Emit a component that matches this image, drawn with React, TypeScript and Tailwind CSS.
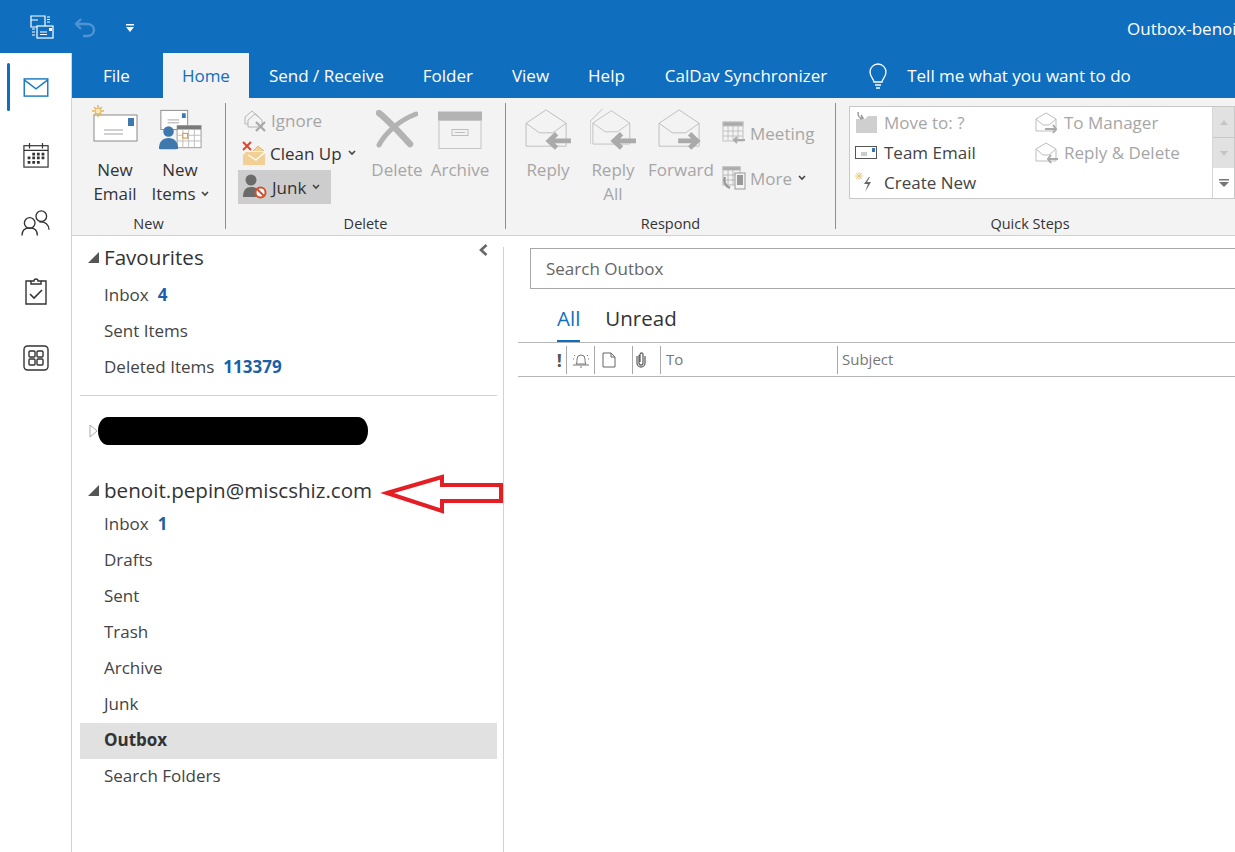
import type { ReactNode } from "react";

const FONT = "font-['Open_Sans','Noto_Sans',sans-serif]";

function MailRail() {
  return (
    <svg width="26" height="19" viewBox="0 0 28 21" fill="none" stroke="#1b7ac2" strokeWidth="1.600">
      <rect x="1" y="1" width="26" height="19" fill="#fff" />
      <path d="M1 2 14 12 27 2" />
    </svg>
  );
}

function CalendarRail() {
  return (
    <svg width="26" height="26" viewBox="0 0 28 28" fill="none" stroke="#333" strokeWidth="1.300">
      <rect x="1" y="4" width="26" height="23" />
      <path d="M1 9h26M7 1v6M21 1v6" />
      <path d="M10 13h3M15 13h3M20 13h3M5 17h3M10 17h3M15 17h3M20 17h3M5 22h3M10 22h3M15 22h3" strokeWidth="3" />
    </svg>
  );
}

function PeopleRail() {
  return (
    <svg width="29" height="28" viewBox="0 0 30 28" fill="none" stroke="#333" strokeWidth="1.400">
      <circle cx="9" cy="14" r="5.500" />
      <path d="M1 27c0-5 3-8 8-8s8 3 8 8" />
      <circle cx="21" cy="7" r="5.500" />
      <path d="M19 13c6-1 10 3 10 8" />
    </svg>
  );
}

function TasksRail() {
  return (
    <svg width="24" height="28" viewBox="0 0 24 28" fill="none" stroke="#333" strokeWidth="1.400">
      <path d="M7 4H2v23h20V4h-5" />
      <path d="M7 7V4h3a2 2 0 0 1 4 0h3v3z" />
      <path d="m6 17 4 4 8-8" strokeWidth="1.600" />
    </svg>
  );
}

function AppsRail() {
  return (
    <svg width="26" height="26" viewBox="0 0 26 26" fill="none" stroke="#333" strokeWidth="1.400">
      <rect x="1" y="1" width="24" height="24" rx="3.500" />
      <rect x="6" y="6" width="6" height="6" rx="1" />
      <rect x="14" y="6" width="6" height="6" rx="1" />
      <rect x="6" y="14" width="6" height="6" rx="1" />
      <rect x="14" y="14" width="6" height="6" rx="1" />
    </svg>
  );
}

function QatIcon() {
  return (
    <svg width="24" height="24" viewBox="0 0 24 24" fill="none" stroke="#fff" strokeWidth="1.200">
      <path d="M1 1h14v11H1zM1 5h7M17 2h3M17 4.500h3M17 7h3" />
      <rect x="7" y="11" width="16" height="12" fill="#106ebe" />
      <path d="M10 17h7M10 19.500h7" />
      <rect x="19" y="13" width="3" height="3" fill="#fff" stroke="none" />
      <path d="M2 14h3M2 17h3M2 20h3" />
    </svg>
  );
}

function UndoIcon() {
  return (
    <svg width="22" height="20" viewBox="0 0 22 20" fill="none" stroke="#4f93d3" strokeWidth="2.400">
      <path d="M7 1 2 6l5 5" />
      <path d="M2 6h11c4 0 7 2.500 7 6s-3 6-7 6H9" />
    </svg>
  );
}

function NewEmailIcon() {
  return (
    <svg width="48" height="40" viewBox="0 0 48 40" fill="none" className="mb-[6px]">
      <rect x="3" y="11" width="43" height="26" fill="#fff" stroke="#8a8a8a" />
      <rect x="37" y="14" width="6" height="8" fill="#3f78ad" />
      <path d="M13 26h19M13 30h19" stroke="#a5a5a5" />
      <g stroke="#e5b763" strokeWidth="1.500">
        <path d="M7 1v12M1 7h12M3 3l8 8M11 3l-8 8" />
      </g>
      <circle cx="7" cy="7" r="3" fill="#f8e7b8" stroke="#e5b763" />
    </svg>
  );
}

function NewItemsIcon() {
  return (
    <svg width="44" height="41" viewBox="0 0 46 42" fill="none">
      <rect x="3" y="1" width="28" height="20" fill="#fff" stroke="#8a8a8a" />
      <rect x="25" y="4" width="4" height="5" fill="#3f78ad" />
      <path d="M10 11h12M10 14h12" stroke="#a5a5a5" />
      <rect x="20" y="17" width="25" height="23" fill="#fff" stroke="#9a9a9a" />
      <rect x="20" y="17" width="25" height="4" fill="#7a7a7a" />
      <path d="M26 21v19M32 21v19M38 21v19M20 27h25M20 33h25" stroke="#bdbdbd" />
      <rect x="26" y="25" width="5" height="5" fill="#fff" stroke="#d98a2b" />
      <circle cx="11" cy="23" r="5.500" fill="#3f78ad" />
      <path d="M1 41c0-7 4-11 10-11s10 4 10 11c0 1-20 1-20 0z" fill="#3f78ad" />
    </svg>
  );
}

function IgnoreIcon() {
  return (
    <svg width="24" height="24" viewBox="0 0 24 24" fill="none" stroke="#b5b5b5">
      <path d="M2 9 9 3l7 6v7H2z" fill="#f3f3f3" />
      <path d="M5 12 12 6l7 6v7H5z" fill="#f3f3f3" />
      <path d="m13 14 9 9M22 14l-9 9" strokeWidth="2.200" stroke="#a8a8a8" />
    </svg>
  );
}

function CleanUpIcon() {
  return (
    <svg width="24" height="24" viewBox="0 0 24 24" fill="none">
      <path d="M4 11h19v13H1V14z" fill="#f2cf95" />
      <path d="m6 14 8 5 9-8" stroke="#fff" strokeWidth="1.400" />
      <path d="M11 10 16 5l6 5" fill="#f2cf95" stroke="#e2b66f" />
      <path d="m1 1 8 8M9 1 1 9" stroke="#d9482f" strokeWidth="2" />
    </svg>
  );
}

function JunkIcon() {
  return (
    <svg width="26" height="26" viewBox="0 0 26 26" fill="none">
      <circle cx="9" cy="6" r="5.500" fill="#6b6b6b" />
      <path d="M1 23c0-7 3-10 8-10s7 2 8 5v5z" fill="#6b6b6b" />
      <circle cx="18.500" cy="18.500" r="5" fill="#fff" stroke="#d4502f" strokeWidth="2" />
      <path d="m15 15 7 7" stroke="#d4502f" strokeWidth="2" />
    </svg>
  );
}

function DeleteIcon() {
  return (
    <svg width="42" height="38" viewBox="0 0 42 38" fill="none" stroke="#b3b3b3" strokeLinecap="round" className="mb-[2px]">
      <path d="M3 3c10 8 20 19 31 31" strokeWidth="6.500" />
      <path d="M40 4C24 10 10 22 3 35" strokeWidth="5" />
    </svg>
  );
}

function ArchiveIcon() {
  return (
    <svg width="44" height="39" viewBox="0 0 44 38" fill="none">
      <rect x="0" y="0" width="44" height="9" fill="#b3b3b3" />
      <rect x="1" y="9" width="42" height="28" stroke="#c4c4c4" />
      <rect x="14" y="18" width="16" height="6" stroke="#bdbdbd" />
      <path d="M17 21h10" stroke="#bdbdbd" />
    </svg>
  );
}

function EnvelopeOpen({ dir, stack }: { dir: "left" | "right"; stack?: boolean }) {
  return (
    <svg width="46" height="42" viewBox="0 0 48 44" fill="none" stroke="#bdbdbd">
      {stack && <path d="M0 38V14L13 1" />}
      <path d="M1 16 22 2l21 14v24H1z" fill="#f3f3f3" transform={stack ? "translate(2 1) scale(.92)" : undefined} />
      <path d="m1 16 14 10h14l14-10" transform={stack ? "translate(2 1) scale(.92)" : undefined} />
      {dir === "left" ? (
        <path d="M33 27 25 34.500l8 7.500M26 34.500h22" stroke="#aaa" strokeWidth="5" />
      ) : (
        <path d="M33 27l8 7.500-8 7.500M21 34.500h19" stroke="#aaa" strokeWidth="5" />
      )}
    </svg>
  );
}

function MeetingIcon() {
  return (
    <svg width="24" height="24" viewBox="0 0 24 24" fill="none" stroke="#c2c2c2">
      <rect x="1" y="1" width="20" height="19" fill="#f3f3f3" />
      <rect x="1" y="1" width="20" height="4" fill="#aaa" />
      <path d="M6 5v15M11 5v15M16 5v15M1 10h20M1 15h20" />
      <path d="m15 16-3 3 3 3M13 19h10" stroke="#aaa" strokeWidth="1.800" />
    </svg>
  );
}

function MoreIcon() {
  return (
    <svg width="24" height="24" viewBox="0 0 24 24" fill="none" stroke="#b8b8b8">
      <rect x="1" y="1" width="17" height="18" fill="#f3f3f3" />
      <rect x="1" y="1" width="17" height="3" fill="#aaa" />
      <path d="M6 4v15M11 4v15M1 9h17M1 14h17" />
      <rect x="13" y="7" width="10" height="16" fill="#f3f3f3" stroke="#999" />
      <rect x="15" y="9" width="6" height="10" fill="#999" stroke="none" />
      <path d="M3 11c-2 4 0 9 5 11" stroke="#999" strokeWidth="2.400" />
    </svg>
  );
}

function MoveToIcon() {
  return (
    <svg width="24" height="22" viewBox="0 0 24 22" fill="none">
      <path d="M1 7h9l3-3h9v17H1z" fill="#cfcfcf" />
      <path d="M3 0c0 5 1 6 5 6M5 7 8 6 6 3" stroke="#9c9c9c" strokeWidth="1.500" />
    </svg>
  );
}

function TeamEmailIcon() {
  return (
    <svg width="22" height="14" viewBox="0 0 22 14" fill="none">
      <rect x="0.500" y="0.500" width="21" height="12" fill="#fff" stroke="#555" />
      <rect x="17" y="2" width="3" height="4" fill="#2f74b5" />
      <path d="M6 7h6M6 9h6" stroke="#999" />
    </svg>
  );
}

function CreateNewIcon() {
  return (
    <svg width="22" height="22" viewBox="0 0 22 22" fill="none">
      <path d="M4 0v8M0 4h8M1 1l6 6M7 1 1 7" stroke="#e8c77e" />
      <path d="M14 5 9 12h4l-3 8 6-10h-4l3-5z" fill="#666" />
    </svg>
  );
}

function SmallEnvelope({ dir }: { dir: "left" | "right" }) {
  return (
    <svg width="24" height="22" viewBox="0 0 24 22" fill="none" stroke="#bdbdbd">
      <path d="M1 7 11 1l10 6v12H1z" fill="#fff" />
      <path d="m1 7 7 6h6l7-6" />
      {dir === "left" ? (
        <path d="M16 13l-3 4 3 4M14 17h9" stroke="#aaa" strokeWidth="2" />
      ) : (
        <path d="M18 13l3 4-3 4M10 17h10" stroke="#aaa" strokeWidth="2" />
      )}
    </svg>
  );
}

function Chevron({ className = "stroke-[#444]" }: { className?: string }) {
  return (
    <svg width="8" height="6" viewBox="0 0 8 6" fill="none" className={className} strokeWidth="1.600">
      <path d="m1 1 3 3 3-3" />
    </svg>
  );
}

function Sep() {
  return <div className="mb-[6px] w-px shrink-0 bg-[#8f8f8f]" />;
}

function Group({ label, width, children }: { label: string; width: string; children: ReactNode }) {
  return (
    <div className={`flex shrink-0 flex-col ${width}`}>
      <div className="flex flex-1">{children}</div>
      <div className="h-[22px] text-center text-[14.500px] leading-[22px] text-[#333]">{label}</div>
    </div>
  );
}

function BigButton({
  icon,
  lines,
  width,
  muted,
  chevron,
}: {
  icon: ReactNode;
  lines: string[];
  width: string;
  muted?: boolean;
  chevron?: boolean;
}) {
  return (
    <div className={`flex shrink-0 flex-col items-center ${width}`}>
      <div className="flex h-[47px] items-end justify-center">{icon}</div>
      <div className={`mt-[8px] text-center text-[17px] leading-[24px] ${muted ? "text-[#a6a6a6]" : "text-[#333]"}`}>
        {lines.map((line, i) => (
          <div key={line} className="flex items-center justify-center gap-[5px] whitespace-nowrap">
            {line}
            {chevron && i === lines.length - 1 && <Chevron />}
          </div>
        ))}
      </div>
    </div>
  );
}

function SmallRow({
  icon,
  label,
  muted,
  chevron,
  className = "",
}: {
  icon: ReactNode;
  label: string;
  muted?: boolean;
  chevron?: boolean;
  className?: string;
}) {
  return (
    <div className={`flex items-center gap-[4px] whitespace-nowrap text-[17px] ${muted ? "text-[#a6a6a6]" : "text-[#333]"} ${className}`}>
      {icon}
      <span className="pt-[2px]">{label}</span>
      {chevron && <Chevron className="ml-[2px] stroke-[#444]" />}
    </div>
  );
}

function QuickStep({ icon, label, muted }: { icon: ReactNode; label: string; muted?: boolean }) {
  return (
    <div className={`flex h-[30px] items-center whitespace-nowrap text-[17px] ${muted ? "text-[#a6a6a6]" : "text-[#444]"}`}>
      <div className="flex w-[29px] justify-start">{icon}</div>
      {label}
    </div>
  );
}

function Ribbon() {
  return (
    <div className="flex h-[138px] shrink-0 overflow-hidden border-b border-[#d2d2d2] bg-[#f3f3f3] pt-[5px]">
      <Group label="New" width="w-[153px]">
        <div className="flex pl-[10px]">
          <BigButton icon={<NewEmailIcon />} lines={["New", "Email"]} width="w-[66px]" />
          <BigButton icon={<NewItemsIcon />} lines={["New", "Items"]} width="w-[64px]" chevron />
        </div>
      </Group>
      <Sep />
      <Group label="Delete" width="w-[279px]">
        <div className="flex pl-[12px]">
          <div className="flex w-[127px] shrink-0 flex-col">
            <SmallRow muted icon={<IgnoreIcon />} label="Ignore" className="mt-[1px] h-[32px] pl-[5px]" />
            <SmallRow icon={<CleanUpIcon />} label="Clean Up" chevron className="h-[34px] pl-[4px]" />
            <SmallRow icon={<JunkIcon />} label="Junk" chevron className="h-[34px] w-[93px] gap-0 bg-[#cdcdcd] pl-[4px]" />
          </div>
          <BigButton muted icon={<DeleteIcon />} lines={["Delete"]} width="w-[64px]" />
          <BigButton muted icon={<ArchiveIcon />} lines={["Archive"]} width="w-[62px]" />
        </div>
      </Group>
      <Sep />
      <Group label="Respond" width="w-[329px]">
        <div className="flex pl-[10px]">
          <BigButton muted icon={<EnvelopeOpen dir="left" />} lines={["Reply"]} width="w-[64px]" />
          <BigButton muted icon={<EnvelopeOpen dir="left" stack />} lines={["Reply", "All"]} width="w-[66px]" />
          <BigButton muted icon={<EnvelopeOpen dir="right" />} lines={["Forward"]} width="w-[70px]" />
          <div className="ml-[6px] flex flex-col pt-[16px]">
            <SmallRow muted icon={<MeetingIcon />} label="Meeting" className="h-[28px]" />
            <SmallRow muted icon={<MoreIcon />} label="More" chevron className="mt-[17px] h-[28px]" />
          </div>
        </div>
      </Group>
      <Sep />
      <Group label="Quick Steps" width="w-[388px]">
        <div className="mt-[3px] ml-[13px] flex h-[93px] w-[386px] shrink-0 border border-[#c8c8c8] bg-white">
          <div className="w-[185px] shrink-0 pt-[1px] pl-[5px]">
            <QuickStep muted icon={<MoveToIcon />} label="Move to: ?" />
            <QuickStep icon={<TeamEmailIcon />} label="Team Email" />
            <QuickStep icon={<CreateNewIcon />} label="Create New" />
          </div>
          <div className="w-[177px] shrink-0 pt-[1px]">
            <QuickStep muted icon={<SmallEnvelope dir="right" />} label="To Manager" />
            <QuickStep muted icon={<SmallEnvelope dir="left" />} label="Reply & Delete" />
          </div>
          <div className="flex w-[22px] shrink-0 flex-col border-l border-[#d6d6d6]">
            <div className="flex h-[31px] items-center justify-center border-b border-[#c8c8c8] bg-[#e1e1e1]">
              <svg width="8" height="5" viewBox="0 0 8 5" fill="#c4c4c4"><path d="M4 0 8 5H0z" /></svg>
            </div>
            <div className="flex h-[30px] items-center justify-center bg-[#e1e1e1]">
              <svg width="8" height="5" viewBox="0 0 8 5" fill="#c4c4c4"><path d="M0 0h8L4 5z" /></svg>
            </div>
            <div className="flex flex-1 items-center justify-center">
              <svg width="10" height="8" viewBox="0 0 10 8" fill="#777"><path d="M0 0h10v1.500H0zM0 3h10L5 8z" /></svg>
            </div>
          </div>
        </div>
      </Group>
    </div>
  );
}

function TitleBar() {
  return (
    <div className="flex h-[53px] shrink-0 items-center bg-[#106ebe] text-white">
      <div className="ml-[30px] shrink-0">
        <QatIcon />
      </div>
      <div className="ml-[20px] mt-[3px] shrink-0">
        <UndoIcon />
      </div>
      <svg width="8" height="8" viewBox="0 0 8 8" fill="#fff" className="ml-[30px] mt-[3px] shrink-0">
        <path d="M0 0h8v1.500H0zM0 3h8L4 8z" />
      </svg>
      <div className="ml-[993px] shrink-0 whitespace-nowrap pt-[4px] text-[17px]">Outbox-benoit.pepin@miscshiz.com</div>
    </div>
  );
}

function TabBar() {
  return (
    <div className="flex h-[45px] shrink-0 items-center whitespace-nowrap bg-[#106ebe] text-[17px] text-white">
      <div className="pl-[31px]">File</div>
      <div className="ml-[33px] flex h-full w-[86px] items-center justify-center bg-[#f3f3f3] text-[#106ebe]">Home</div>
      <div className="ml-[20px]">Send / Receive</div>
      <div className="ml-[39px]">Folder</div>
      <div className="ml-[39px]">View</div>
      <div className="ml-[39px]">Help</div>
      <div className="ml-[40px]">CalDav Synchronizer</div>
      <svg width="24" height="26" viewBox="0 0 24 26" fill="none" stroke="#fff" strokeWidth="1.300" className="ml-[39px]">
        <path d="M8 19c0-3-4-5-4-10a8 8 0 0 1 16 0c0 5-4 7-4 10zM9 22h6M10 25h4" />
      </svg>
      <div className="ml-[17px]">Tell me what you want to do</div>
    </div>
  );
}

function Folder({ name, count, active }: { name: string; count?: string; active?: boolean }) {
  return (
    <div className={`flex h-[36px] items-center gap-[9px] pb-[2px] pl-[24px] text-[17px] whitespace-nowrap ${active ? "bg-[#e1e1e1] font-bold text-[#333]" : "text-[#444]"}`}>
      {name}
      {count && <span className="font-bold text-[#1a5fa8]">{count}</span>}
    </div>
  );
}

function AccountHeader({ label }: { label: string }) {
  return (
    <div className="flex h-[36px] items-center text-[20.600px] whitespace-nowrap text-[#333]">
      <svg width="11" height="11" viewBox="0 0 11 11" fill="#555" className="ml-[8px] mr-[5px]">
        <path d="M11 0v11H0z" />
      </svg>
      {label}
    </div>
  );
}

function FolderPane() {
  return (
    <>
      <div className="relative w-[431px] shrink-0 pt-[3px] pr-[6px] pl-[8px]">
        <svg width="9" height="12" viewBox="0 0 9 12" fill="none" stroke="#666" strokeWidth="2.600" className="absolute top-[8px] left-[407px]">
          <path d="M7.500 1 2 6l5.500 5" />
        </svg>
        <AccountHeader label="Favourites" />
        <div className="pt-[3px]">
          <Folder name="Inbox" count="4" />
          <Folder name="Sent Items" />
          <Folder name="Deleted Items" count="113379" />
        </div>
        <div className="mt-[9px] h-px bg-[#d2d2d2]" />
        <div className="flex h-[67px] items-center pt-[2px]">
          <svg width="9" height="14" viewBox="0 0 9 14" fill="none" stroke="#a8a8a8" className="ml-[9px] shrink-0">
            <path d="M1 1v12l7-6z" />
          </svg>
          <div className="h-[28px] w-[270px] shrink-0 rounded-[10px/14px] bg-black" />
        </div>
        <div className="pt-[9px]">
          <AccountHeader label="benoit.pepin@miscshiz.com" />
        </div>
        <div className="-mt-[1px]">
          <Folder name="Inbox" count="1" />
          <Folder name="Drafts" />
          <Folder name="Sent" />
          <Folder name="Trash" />
          <Folder name="Archive" />
          <Folder name="Junk" />
          <Folder name="Outbox" active />
          <Folder name="Search Folders" />
        </div>
      </div>
      <div className="mt-[11px] w-px shrink-0 bg-[#d2d2d2]" />
    </>
  );
}

function ColumnCell({ width, children }: { width: string; children?: ReactNode }) {
  return (
    <div className={`flex h-[28px] shrink-0 items-center border-r border-[#aaa] ${width}`}>{children}</div>
  );
}

function MessagePane() {
  return (
    <div className="min-w-0 flex-1 overflow-hidden pt-[12px] pl-[14px]">
      <div className="ml-[12px] flex h-[41px] w-[720px] items-center border border-[#a8a8a8] pl-[15px] text-[17px] text-[#666]">
        Search Outbox
      </div>
      <div className="flex h-[54px] items-end gap-[25px] border-b border-[#b5b5b5] pl-[39px] text-[20.500px] text-[#333]">
        <div className="h-[39px] border-b-2 border-[#106ebe] text-[#106ebe]">All</div>
        <div className="h-[39px]">Unread</div>
      </div>
      <div className="flex h-[34px] w-[760px] items-center border-b border-[#b5b5b5] text-[15px] text-[#777]">
        <div className="w-[45px] shrink-0 pr-[1px] text-right text-[18px] font-bold leading-none text-[#555]">!</div>
        <div className="mx-[3px] h-[28px] w-px shrink-0 bg-[#aaa]" />
        <ColumnCell width="w-[25px] justify-center pr-[2px]">
          <svg width="18" height="18" viewBox="0 0 18 18" fill="none" stroke="#777">
            <path d="M4 13c1-1 1-3 1-5a4 4 0 0 1 8 0c0 2 0 4 1 5zM1 14h16M8 16h2M2 4l1 1M16 4l-1 1M1 8h1M16 8h1" />
          </svg>
        </ColumnCell>
        <ColumnCell width="w-[38px] pl-[7px]">
          <svg width="14" height="16" viewBox="0 0 14 16" fill="none" stroke="#666">
            <path d="M1 1h8l4 4v10H1zM9 1v4h4" />
          </svg>
        </ColumnCell>
        <ColumnCell width="w-[28px] pl-[2px]">
          <svg width="12" height="16" viewBox="0 0 12 16" fill="none" stroke="#666" strokeWidth="1.300">
            <path d="M4 3v8a2 2 0 0 0 4 0V2.500a1.500 1.500 0 0 0-3 0V10M2 4v7a4 4 0 0 0 8 0V4" />
          </svg>
        </ColumnCell>
        <div className="flex h-[28px] w-[177px] shrink-0 items-center border-r border-[#aaa] pl-[5px]">To</div>
        <div className="pl-[4px]">Subject</div>
      </div>
    </div>
  );
}

export default function App() {
  return (
    <div className={`relative flex h-[852px] w-[1235px] flex-col overflow-hidden bg-white ${FONT}`}>
      <TitleBar />
      <div className="flex min-h-0 flex-1">
        <div className="flex w-[72px] shrink-0 flex-col items-center border-r border-[#d2d2d2] bg-white">
          <div className="relative flex h-[68px] w-full items-center justify-center">
            <div className="absolute top-[10px] left-[7px] h-[48px] w-[3px] rounded-full bg-[#106ebe]" />
            <MailRail />
          </div>
          <div className="flex h-[68px] items-center justify-center"><CalendarRail /></div>
          <div className="flex h-[68px] items-center justify-center"><PeopleRail /></div>
          <div className="flex h-[68px] items-center justify-center"><TasksRail /></div>
          <div className="flex h-[66px] items-center justify-center"><AppsRail /></div>
        </div>
        <div className="flex min-w-0 flex-1 flex-col">
          <TabBar />
          <Ribbon />
          <div className="flex min-h-0 flex-1">
            <FolderPane />
            <MessagePane />
          </div>
        </div>
      </div>
      {/* annotation drawn on top of the screenshot */}
      <svg width="126" height="42" viewBox="0 0 126 42" fill="none" className="absolute top-[473px] left-[380px]">
        <path d="M7 20 62 4v8h59v16H62v10z" stroke="#e31e24" strokeWidth="4" fill="#fff" />
      </svg>
    </div>
  );
}
